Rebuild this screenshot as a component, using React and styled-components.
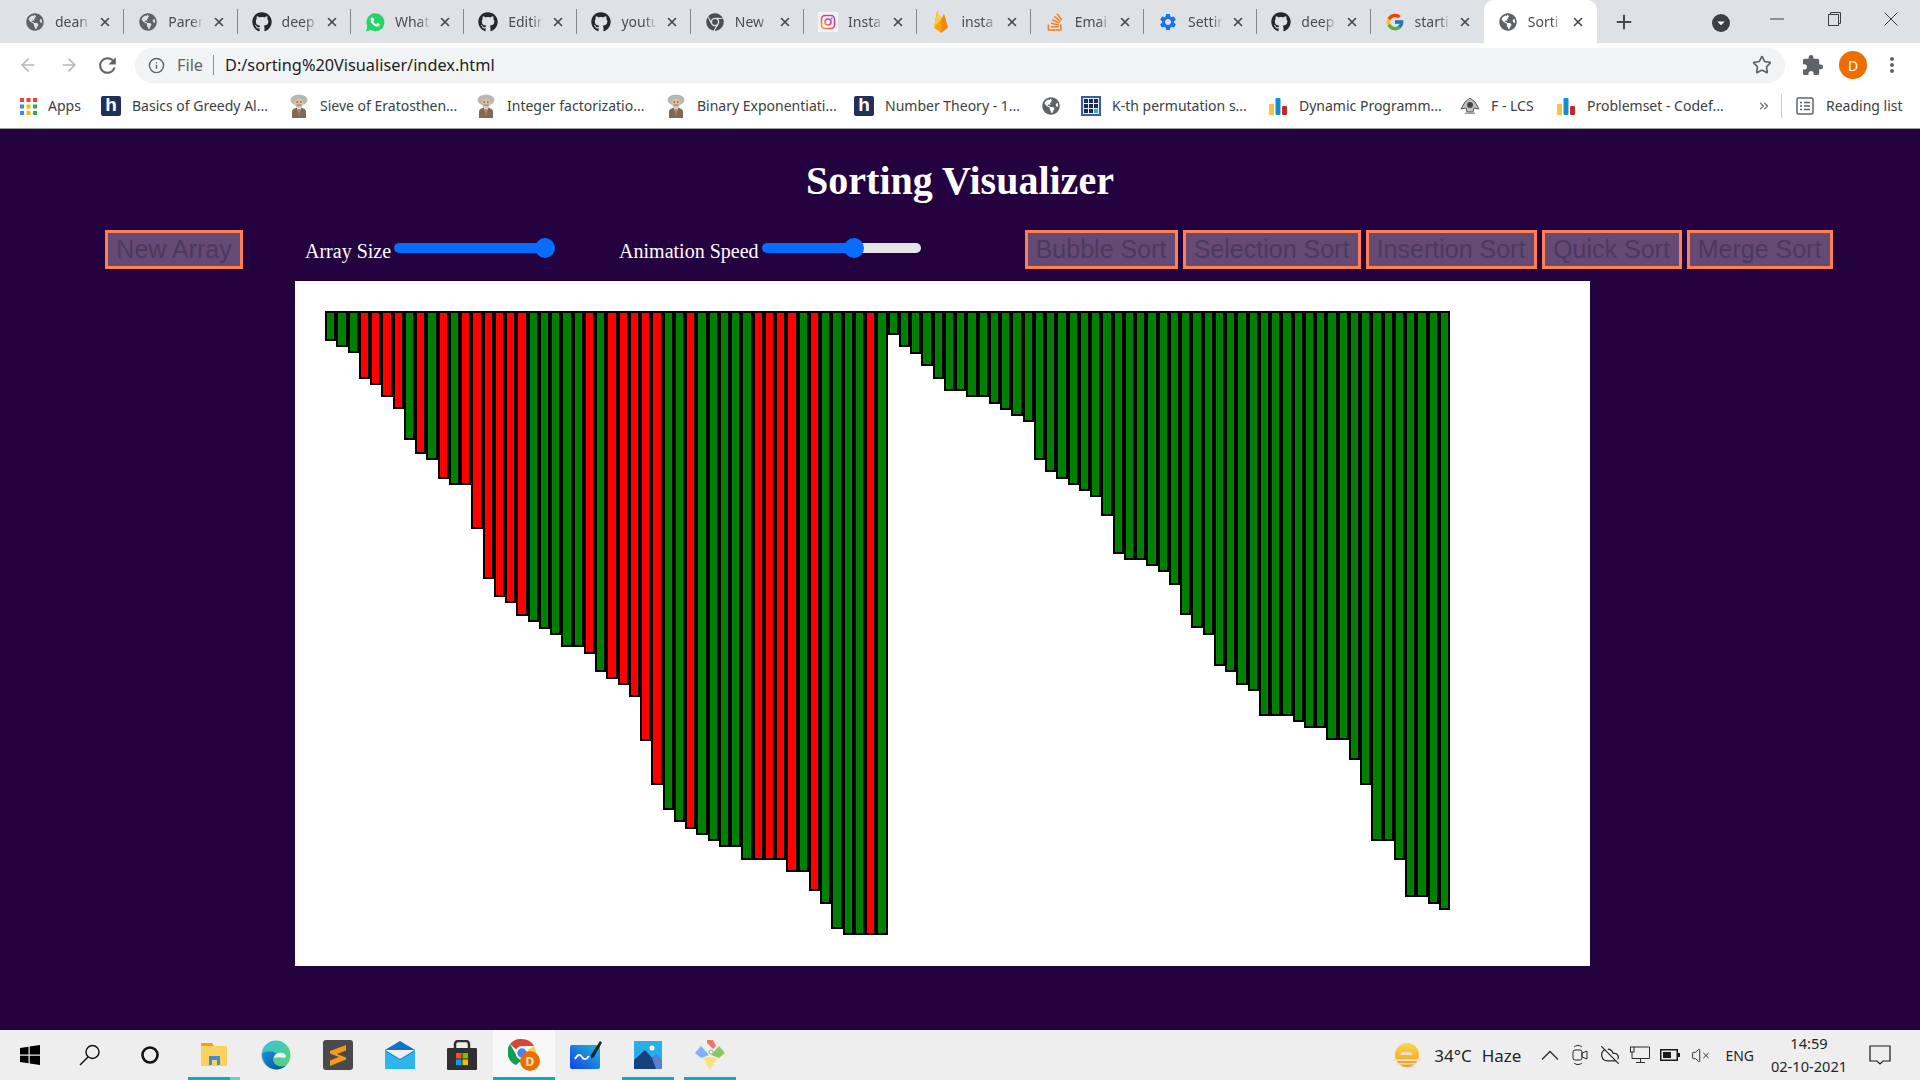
import React from "react";
import styled, { createGlobalStyle } from "styled-components";
import { FaGithub, FaGlobeAmericas, FaChrome, FaStackOverflow } from "react-icons/fa";
import { FcGoogle } from "react-icons/fc";
import { MdSettings, MdExtension, MdMoreVert, MdRefresh, MdArrowDropDown } from "react-icons/md";
import {
  ArrowLeft,
  ArrowRight,
  X,
  Plus,
  Info,
  Star,
  CloudOff,
  VolumeX,
  ChevronsRight,
} from "lucide-react";

const GlobalStyle = createGlobalStyle`
  html, body {
    margin: 0;
    padding: 0;
    height: 100%;
    overflow: hidden;
  }
  #root {
    height: 100%;
  }
`;

const Screen = styled.div`
  width: 1920px;
  height: 1080px;
  display: flex;
  flex-direction: column;
  font-family: "Noto Sans", sans-serif;
  background-color: #24023f;
`;

/* browser chrome */
const TabStrip = styled.div`
  height: 43px;
  flex: none;
  display: flex;
  align-items: stretch;
  padding-left: 11px;
  background-color: #dee1e6;
`;
const Tab = styled.div`
  position: relative;
  width: 113.3px;
  box-sizing: border-box;
  display: flex;
  align-items: center;
  padding: 0 12px 0 14px;
  color: #4a4d51;
  border-radius: 10px 10px 0 0;
  background-color: ${(p) => (p.$active ? "#ffffff" : "transparent")};
  &::after {
    content: "";
    display: ${(p) => (p.$last ? "none" : "block")};
    position: absolute;
    right: 0;
    top: 9px;
    height: 25px;
    width: 1px;
    background-color: #83868a;
  }
`;
const TabIcon = styled.span`
  width: 20px;
  height: 20px;
  flex: none;
  display: flex;
  align-items: center;
  justify-content: center;
  font-size: 20px;
  color: #5f6368;
`;
const TabTitle = styled.span`
  margin-left: 10px;
  width: 38px;
  flex: none;
  overflow: hidden;
  white-space: nowrap;
  font-size: 14px;
  -webkit-mask-image: linear-gradient(to right, #000 62%, transparent 94%);
`;
const TabClose = styled.span`
  margin-left: auto;
  display: flex;
  color: #45484c;
`;
const NewTab = styled.span`
  margin-left: 16px;
  display: flex;
  align-items: center;
  color: #45484c;
`;
const TabSearch = styled.span`
  margin-left: 77px;
  display: flex;
  align-items: center;
  justify-content: center;
  align-self: center;
  margin-top: 3px;
  width: 18px;
  height: 18px;
  border-radius: 50%;
  background-color: #3c4043;
  color: #ffffff;
`;
const WindowControls = styled.div`
  margin-left: auto;
  display: flex;
`;
const WindowButton = styled.div`
  width: 57.3px;
  height: 38px;
  display: flex;
  align-items: center;
  justify-content: center;
  color: #3d3f42;
`;

const Toolbar = styled.div`
  height: 43px;
  flex: none;
  display: flex;
  align-items: center;
  background-color: #ffffff;
  padding: 1px 0 0 5px;
  box-sizing: border-box;
`;
const NavButton = styled.span`
  width: ${(p) => p.$w}px;
  display: flex;
  justify-content: center;
  color: ${(p) => (p.$off ? "#b4b7ba" : "#5f6368")};
`;
const Omnibox = styled.div`
  width: 1650px;
  height: 35px;
  margin-left: 8px;
  box-sizing: border-box;
  display: flex;
  align-items: center;
  padding: 0 13px 0 13px;
  border-radius: 18px;
  background-color: #f1f3f4;
  font-size: 16.3px;
  color: #202124;
`;
const SiteChip = styled.span`
  display: flex;
  align-items: center;
  color: #5f6368;
  gap: 12px;
`;
const Divider = styled.span`
  width: 1px;
  height: 20px;
  margin: 0 11px 0 10px;
  background-color: #8a8d91;
`;
const StarSlot = styled.span`
  margin-left: auto;
  display: flex;
  color: #5f6368;
`;
const ExtensionSlot = styled(NavButton)`
  margin-right: -1px;
`;
const Avatar = styled.span`
  width: 28px;
  height: 28px;
  border-radius: 50%;
  display: flex;
  align-items: center;
  justify-content: center;
  background-color: #ef6c00;
  color: #ffffff;
  font-size: 14px;
`;

const BookmarkBar = styled.div`
  height: 43px;
  flex: none;
  display: flex;
  align-items: center;
  box-sizing: border-box;
  padding: 0 0 2px 18px;
  background-color: #ffffff;
  border-bottom: 1px solid #a0a0a8;
`;
const Bookmark = styled.div`
  width: ${(p) => p.$w}px;
  flex: none;
  display: flex;
  align-items: center;
  gap: ${(p) => p.$gap ?? 11}px;
  font-size: 14px;
  color: #3c4043;
  white-space: nowrap;
`;
const BookmarkText = styled.span`
  padding-bottom: 2px;
`;
const BookmarkIcon = styled.span`
  width: 20px;
  height: 20px;
  flex: none;
  display: flex;
  align-items: center;
  justify-content: center;
  color: #5f6368;
`;
const HackerIcon = styled.span`
  width: 20px;
  height: 20px;
  border-radius: 2px;
  background-color: #20305a;
  color: #ffffff;
  font: bold 19px/18px "Liberation Sans", sans-serif;
  text-align: center;
`;
const MoreBookmarks = styled.span`
  width: 34px;
  display: flex;
  justify-content: center;
  color: #5f6368;
`;
const BarDivider = styled.span`
  width: 1px;
  height: 24px;
  margin-right: 13px;
  background-color: #c8cacc;
`;

/* the page itself */
const Page = styled.main`
  flex: 1;
  min-height: 0;
  display: flex;
  flex-direction: column;
  font-family: "Liberation Serif", serif;
  color: #ffffff;
`;
const Title = styled.h1`
  margin: 0;
  height: 101px;
  padding-top: 29px;
  box-sizing: border-box;
  text-align: center;
  font-size: 40px;
  line-height: 46px;
  font-weight: bold;
`;
const Controls = styled.div`
  height: 39px;
  display: flex;
  align-items: center;
  padding-left: 105px;
`;
const ActionButton = styled.button`
  height: 39px;
  width: ${(p) => p.$w}px;
  margin-left: ${(p) => p.$ml || 0}px;
  padding: 0;
  box-sizing: border-box;
  border: 3px solid #ff7f50;
  border-radius: 0;
  background-color: #644a74;
  color: #4c3a5c;
  font-family: "Liberation Sans", sans-serif;
  font-size: 25px;
  white-space: nowrap;
`;
const SliderGroup = styled.label`
  display: flex;
  align-items: center;
  margin-left: ${(p) => p.$ml}px;
  font-size: 20px;
`;
const SliderLabel = styled.span`
  position: relative;
  top: 2px;
  margin-right: 3px;
`;
const Slider = styled.input.attrs({ type: "range", min: 0, max: 100 })`
  -webkit-appearance: none;
  appearance: none;
  width: ${(p) => p.$w}px;
  height: 10px;
  margin: 0;
  position: relative;
  top: -2px;
  border-radius: 5px;
  background: linear-gradient(to right, #076dfd ${(p) => p.$fill}%, #e6e6e6 ${(p) => p.$fill}%);
  &::-webkit-slider-thumb {
    -webkit-appearance: none;
    width: 20px;
    height: 20px;
    border-radius: 50%;
    background-color: #076dfd;
  }
`;
const Board = styled.section`
  width: 1295px;
  height: 685px;
  margin: 12px 0 0 295px;
  box-sizing: border-box;
  padding: 30px 140px 0 30px;
  background-color: #ffffff;
`;
const Chart = styled.div`
  display: flex;
  align-items: flex-start;
`;
const Bar = styled.div`
  flex: 1 1 0;
  box-sizing: border-box;
  border: 2px solid #000000;
  background-color: ${(p) => (p.$red ? "#ff0000" : "#008000")};
`;

/* windows taskbar */
const Taskbar = styled.footer`
  height: 50px;
  flex: none;
  display: flex;
  align-items: stretch;
  background-color: #eeeeee;
  font-family: "Noto Sans", sans-serif;
  color: #262626;
`;
const SystemCell = styled.div`
  width: 60px;
  flex: none;
  display: flex;
  align-items: center;
  justify-content: center;
`;
const TaskApps = styled.div`
  display: flex;
  margin-left: 3px;
`;
const TaskCell = styled.div`
  position: relative;
  width: 62px;
  flex: none;
  display: flex;
  align-items: center;
  justify-content: center;
  background-color: ${(p) => (p.$active ? "#f8f8f8" : "transparent")};
  &::after {
    content: "";
    display: ${(p) => (p.$open ? "block" : "none")};
    position: absolute;
    bottom: 0;
    height: 3px;
    left: ${(p) => (p.$active ? 0 : 5)}px;
    right: ${(p) => (p.$active ? 0 : 5)}px;
    background: ${(p) =>
      p.$stacked ? "linear-gradient(to right, #00b0c4 80%, #66d0dc 80%)" : "#00b0c4"};
  }
`;
const Tray = styled.div`
  margin-left: auto;
  display: flex;
  align-items: center;
  padding-right: 12px;
`;
const Weather = styled.span`
  font-size: 17px;
  margin-left: ${(p) => p.$ml}px;
`;
const TrayIcons = styled.div`
  display: flex;
  align-items: center;
  margin-left: 14px;
`;
const TrayIcon = styled.span`
  width: 30px;
  display: flex;
  justify-content: center;
  color: #2b2b2b;
`;
const Lang = styled.span`
  margin-left: 10px;
  font-size: 14px;
`;
const Clock = styled.div`
  width: 80px;
  margin-left: 15px;
  text-align: center;
  font-size: 14.6px;
  line-height: 23px;
`;
const Notify = styled.span`
  margin: 0 17px 0 20px;
  width: 22px;
  display: flex;
`;

/* logo drawings */
const Whatsapp = () => (
  <svg width="20" height="20" viewBox="0 0 20 20">
    <path d="M1 19.4l1.4-5A9 9 0 1 1 5.8 18z" fill="#25d366" />
    <path d="M7.2 5.5c-.6 0-1.6.8-1.6 2.4 0 2.8 3.6 6.6 6.8 6.6 1.5 0 2.3-1 2.3-1.8l-.1-.6-2.2-1-1 1.2c-1.3-.4-2.7-1.8-3.2-3.1l.9-1.1-.9-2.3z" fill="#fff" />
  </svg>
);
const Instagram = () => (
  <svg width="20" height="20" viewBox="0 0 20 20">
    <defs>
      <linearGradient id="ig" x1="0" y1="1" x2="1" y2="0">
        <stop offset="0" stopColor="#f5a13c" />
        <stop offset="0.5" stopColor="#d8457b" />
        <stop offset="1" stopColor="#8a4fc0" />
      </linearGradient>
    </defs>
    <rect width="20" height="20" fill="#f3f3f3" />
    <rect x="3.5" y="3.5" width="13" height="13" rx="3.5" fill="none" stroke="url(#ig)" strokeWidth="1.6" />
    <circle cx="10" cy="10" r="3" fill="none" stroke="url(#ig)" strokeWidth="1.5" />
    <circle cx="13.7" cy="6.3" r="0.9" fill="#a84da8" />
  </svg>
);
const Firebase = () => (
  <svg width="18" height="24" viewBox="0 0 18 24">
    <path d="M2 17.5L5 1l4.500 8L12 4l4 13.500L9 23z" fill="#f6a10e" />
    <path d="M2 17.5L5 1l4.500 8z" fill="#fcca3f" />
    <path d="M9 23l7-5.500L12 4l-2.500 5z" fill="#f08a0c" />
  </svg>
);
const Einstein = () => (
  <svg width="20" height="24" viewBox="0 0 20 24">
    <path d="M3 24v-6c0-3 3-4.500 7-4.500s7 1.500 7 4.500v6z" fill="#7d6a55" />
    <path d="M8 13.500h4l-2 8z" fill="#ece8e0" />
    <rect x="9.4" y="15" width="1.2" height="5" fill="#a83a32" />
    <ellipse cx="10" cy="6" rx="8.500" ry="5.500" fill="#b8b8b2" />
    <ellipse cx="10" cy="9" rx="4.500" ry="4.500" fill="#dcc0a0" />
    <rect x="7.500" y="7.500" width="1.500" height="1.200" fill="#55504a" />
    <rect x="11" y="7.500" width="1.500" height="1.200" fill="#55504a" />
    <rect x="7.500" y="10.500" width="5" height="1.200" fill="#8e8c86" />
  </svg>
);
const AppsGrid = () => (
  <svg width="17" height="17" viewBox="0 0 17 17">
    {["#ea4335", "#ea4335", "#ea4335", "#4285f4", "#fbbc05", "#34a853", "#4285f4", "#fbbc05", "#34a853"].map((c, i) => (
      <rect key={i} x={(i % 3) * 6.5} y={Math.floor(i / 3) * 6.5} width="4" height="4" fill={c} />
    ))}
  </svg>
);
const GridLogo = () => (
  <svg width="20" height="20" viewBox="0 0 20 20">
    <rect width="20" height="20" fill="#3a5da8" />
    <rect x="2" y="2" width="16" height="16" fill="#e8eef8" />
    {[0, 1, 2, 3, 4, 5, 6, 7, 8].map((i) => (
      <rect key={i} x={3 + (i % 3) * 5} y={3 + Math.floor(i / 3) * 5} width="4" height="4" fill={i === 8 ? "#4aa" : "#1e2c4e"} />
    ))}
  </svg>
);
const CfBars = () => (
  <svg width="20" height="20" viewBox="0 0 20 20">
    <rect x="1" y="8" width="5" height="11" rx="1" fill="#f9c13c" />
    <rect x="7.5" y="2" width="5" height="17" rx="1" fill="#1a8ad0" />
    <rect x="14" y="10" width="5" height="9" rx="1" fill="#c62828" />
  </svg>
);
const Crest = () => (
  <svg width="20" height="20" viewBox="0 0 20 20">
    <path d="M10 2l5 4 4 7-5-1-1 4H7l-1-4-5 1 4-7z" fill="#bfc1c2" stroke="#555" strokeWidth="1" />
    <circle cx="10" cy="9" r="3" fill="#444" />
    <rect x="5" y="16.5" width="10" height="1.5" fill="#999" />
  </svg>
);
const ReadingList = () => (
  <svg width="18" height="18" viewBox="0 0 18 18" fill="none" stroke="#5f6368" strokeWidth="1.5">
    <rect x="1" y="1" width="16" height="16" rx="1.5" />
    <path d="M4 5.5h2M8 5.5h6M4 9h2M8 9h6M4 12.5h2M8 12.5h6" />
  </svg>
);
const Restore = () => (
  <svg width="13" height="14" viewBox="0 0 13 14" fill="none" stroke="#3d3f42" strokeWidth="1">
    <rect x="0.5" y="2.5" width="10" height="11" />
    <path d="M2.5 2.5v-2h10v11h-2" />
  </svg>
);
const WinClose = () => (
  <svg width="14" height="14" viewBox="0 0 14 14" stroke="#3d3f42" strokeWidth="1">
    <path d="M.5.5l13 13M13.5.5l-13 13" />
  </svg>
);
const WinMin = () => (
  <svg width="14" height="2" viewBox="0 0 14 2" stroke="#3d3f42" strokeWidth="1">
    <path d="M0 1h14" />
  </svg>
);

const WinLogo = () => (
  <svg width="22" height="22" viewBox="0 0 22 22" fill="#000">
    <path d="M1 4l8.5-1.300V10.500H1zM10.700 2.500L21 1v9.500H10.700zM1 11.700h8.500v7.600L1 18zM10.700 11.700H21V21l-10.300-1.500z" />
  </svg>
);
const SearchGlyph = () => (
  <svg width="24" height="24" viewBox="0 0 24 24" fill="none" stroke="#111" strokeWidth="1.4">
    <circle cx="14.5" cy="9" r="6.5" />
    <path d="M10 14l-8 8" />
  </svg>
);
const Cortana = () => (
  <svg width="20" height="20" viewBox="0 0 20 20" fill="none" stroke="#111" strokeWidth="2.6">
    <circle cx="10" cy="10" r="7.5" />
  </svg>
);
const Explorer = () => (
  <svg width="28" height="26" viewBox="0 0 28 26">
    <path d="M1 1h11l2 3H1z" fill="#e8a317" />
    <rect x="1" y="4" width="26" height="20" fill="#fbd35c" />
    <path d="M9 23V14h11v9h-3v-5h-5v5z" fill="#3f8ed8" />
  </svg>
);
const Edge = () => (
  <svg width="30" height="30" viewBox="0 0 30 30">
    <defs>
      <linearGradient id="edgeA" x1="0" y1="0" x2="1" y2="1">
        <stop offset="0" stopColor="#37c2e0" />
        <stop offset="1" stopColor="#5fd26a" />
      </linearGradient>
      <linearGradient id="edgeB" x1="0" y1="0" x2="1" y2="1">
        <stop offset="0" stopColor="#1b8fd6" />
        <stop offset="1" stopColor="#0c4d92" />
      </linearGradient>
    </defs>
    <circle cx="15" cy="15" r="14.5" fill="url(#edgeA)" />
    <path d="M1 14C2 25 10 30 16 29.5c5-.4 8-3 9-4-5 2-10 .5-12-3-2-3.5-.5-7 3-8.5-5-4-13-3-15 0z" fill="url(#edgeB)" />
    <path d="M13 18c0-3 3-6 8-5 3 .5 4 2 4 3 0 2-3 2-5 1.500-2-.5-4 0-7 .5z" fill="#eef7ee" />
  </svg>
);
const Sublime = () => (
  <svg width="30" height="30" viewBox="0 0 30 30">
    <rect width="30" height="30" rx="3" fill="#4a4a4a" />
    <path d="M7 11L23 5v5.500L14 14l9 3.500v2L7 26v-5.500l9-3.500-9-3.500z" fill="#f69a1c" />
  </svg>
);
const Mail = () => (
  <svg width="30" height="28" viewBox="0 0 30 28">
    <path d="M0 9L15 0l15 9v19H0z" fill="#1173c8" />
    <path d="M0 9h30L15 18z" fill="#f0f0f0" />
    <path d="M0 10l15 9 15-9v18H0z" fill="#2fb5ee" />
  </svg>
);
const Store = () => (
  <svg width="30" height="30" viewBox="0 0 30 30">
    <rect y="8" width="30" height="22" rx="1" fill="#303030" />
    <path d="M8 9V4a3 3 0 0 1 3-3h8a3 3 0 0 1 3 3v5" fill="none" stroke="#303030" strokeWidth="2.5" />
    <rect x="9" y="13" width="5.5" height="5.5" fill="#f25022" />
    <rect x="15.5" y="13" width="5.5" height="5.5" fill="#7fba00" />
    <rect x="9" y="19.5" width="5.5" height="5.5" fill="#00a4ef" />
    <rect x="15.5" y="19.5" width="5.5" height="5.5" fill="#ffb900" />
  </svg>
);
const ChromeProfile = () => (
  <svg width="32" height="32" viewBox="0 0 32 32">
    <path d="M14 0a14 14 0 0 1 12 7H14a7 7 0 0 0-6 3.5L2 5a14 14 0 0 1 12-5z" fill="#db4437" />
    <path d="M2 5l6 10.5a7 7 0 0 0 6 5.5L8 26A14 14 0 0 1 2 5z" fill="#0f9d58" />
    <path d="M26 7a14 14 0 0 1-6 20l-6-6a7 7 0 0 0 6-10z" fill="#ffcd40" />
    <circle cx="14" cy="14" r="5.5" fill="#4285f4" stroke="#fff" strokeWidth="1.5" />
    <circle cx="22" cy="22" r="10" fill="#ef6c00" />
    <text x="22" y="26.5" textAnchor="middle" fontSize="12" fontWeight="bold" fill="#f5e6c8" fontFamily="Noto Sans, sans-serif">D</text>
  </svg>
);
const Whiteboard = () => (
  <svg width="32" height="28" viewBox="0 0 32 28">
    <defs>
      <linearGradient id="wb" x1="0" y1="1" x2="1" y2="0">
        <stop offset="0" stopColor="#1340e8" />
        <stop offset="1" stopColor="#22b8d8" />
      </linearGradient>
    </defs>
    <rect y="4" width="30" height="24" rx="2" fill="url(#wb)" />
    <path d="M5 18c3-5 5-5 7-2s4 3 7-1" fill="none" stroke="#fff" strokeWidth="1.8" />
    <path d="M21 14l9-14 2 1.5L24 16l-3 1.500z" fill="#222" />
  </svg>
);
const Photos = () => (
  <svg width="28" height="28" viewBox="0 0 28 28">
    <rect width="28" height="28" fill="#27aee8" />
    <circle cx="18" cy="7" r="2.5" fill="#fff" />
    <path d="M0 28V19l11-10 7 8 4-3 6 6v8z" fill="#16407e" />
    <path d="M18 17l4-3 6 6v8h-6z" fill="#5a7fd0" />
  </svg>
);
const Sourcetree = () => (
  <svg width="32" height="32" viewBox="0 0 32 32">
    <path d="M16 18l-7 1 7 12 7-12z" fill="#fde07c" />
    <path d="M1 14l6-7 8 9-8 3z" fill="#7fb0f8" />
    <path d="M31 14l-6-7-8 9 8 3z" fill="#8cc866" />
    <path d="M13 1h6l3 6-3 3-6-6z" fill="#ee7668" />
    <circle cx="17" cy="13" r="2" fill="#fff" stroke="#8cc866" />
  </svg>
);
const Sun = () => (
  <svg width="28" height="28" viewBox="0 0 28 28">
    <defs>
      <linearGradient id="sun" x1="0" y1="0" x2="0" y2="1">
        <stop offset="0" stopColor="#fdd84b" />
        <stop offset="1" stopColor="#f39a1e" />
      </linearGradient>
    </defs>
    <circle cx="14" cy="14" r="12" fill="url(#sun)" />
    <path d="M7 14c1-3 4-4 7-3 2-1 5 0 6 3h-13zM0 18h28v2H0zM4 22h20v1.5H4z" fill="#e8e0cc" />
  </svg>
);
const Chevron = () => (
  <svg width="18" height="10" viewBox="0 0 18 10" fill="none" stroke="#2b2b2b" strokeWidth="1.3">
    <path d="M1 9.500l8-8 8 8" />
  </svg>
);
const Camera = () => (
  <svg width="16" height="22" viewBox="0 0 16 22" fill="none" stroke="#2b2b2b" strokeWidth="1">
    <rect x="1" y="6" width="9" height="10" rx="2" />
    <path d="M10 9l5-2v8l-5-2zM2 3c2-2 6-2 8 0M2 19c2 2 6 2 8 0" />
  </svg>
);
const Display = () => (
  <svg width="20" height="18" viewBox="0 0 20 18" fill="none" stroke="#2b2b2b" strokeWidth="1">
    <path d="M4 1h15.5v11.5H2V6M10.5 12.5v4M6 16.5h9" />
    <rect x="0.5" y="1" width="3.5" height="5" />
  </svg>
);
const Battery = () => (
  <svg width="20" height="12" viewBox="0 0 20 12">
    <rect x="0.75" y="0.75" width="16.5" height="10.5" fill="none" stroke="#1a1a1a" strokeWidth="1.5" />
    <rect x="3" y="3" width="8" height="6" fill="#1a1a1a" />
    <rect x="18" y="4" width="2" height="4" fill="#1a1a1a" />
  </svg>
);
const Balloon = () => (
  <svg width="22" height="20" viewBox="0 0 22 20" fill="none" stroke="#1a1a1a" strokeWidth="1.2">
    <path d="M1 1h20v15h-7l-3 3-3-3H1z" />
  </svg>
);

const CloseIcon = () => <X size={14} strokeWidth={2.8} />;

const tabs = [
  { title: "dean", icon: <FaGlobeAmericas size={18} /> },
  { title: "Paren", icon: <FaGlobeAmericas size={18} /> },
  { title: "deep", icon: <FaGithub size={20} color="#24292e" /> },
  { title: "What", icon: <Whatsapp /> },
  { title: "Editir", icon: <FaGithub size={20} color="#24292e" /> },
  { title: "youtu", icon: <FaGithub size={20} color="#24292e" /> },
  { title: "New", icon: <FaChrome size={18} color="#4a4d51" /> },
  { title: "Insta", icon: <Instagram /> },
  { title: "insta", icon: <Firebase /> },
  { title: "Emai", icon: <FaStackOverflow size={20} color="#f48024" /> },
  { title: "Settir", icon: <MdSettings size={20} color="#1a73e8" /> },
  { title: "deep", icon: <FaGithub size={20} color="#24292e" /> },
  { title: "starti", icon: <FcGoogle size={20} /> },
  { title: "Sorti", icon: <FaGlobeAmericas size={18} />, active: true },
];

const bookmarks = [
  { w: 83, icon: <AppsGrid />, text: "Apps", gap: 10 },
  { w: 188, icon: <HackerIcon>h</HackerIcon>, text: "Basics of Greedy Al..." },
  { w: 187, icon: <Einstein />, text: "Sieve of Eratosthen..." },
  { w: 190, icon: <Einstein />, text: "Integer factorizatio..." },
  { w: 188, icon: <Einstein />, text: "Binary Exponentiati..." },
  { w: 187, icon: <HackerIcon>h</HackerIcon>, text: "Number Theory - 1..." },
  { w: 40, icon: <FaGlobeAmericas size={18} /> },
  { w: 187, icon: <GridLogo />, text: "K-th permutation s..." },
  { w: 192, icon: <CfBars />, text: "Dynamic Programm..." },
  { w: 96, icon: <Crest />, text: "F - LCS" },
  { w: 191, icon: <CfBars />, text: "Problemset - Codef..." },
];

const taskApps = [
  { icon: <Explorer />, open: true, stacked: true },
  { icon: <Edge /> },
  { icon: <Sublime /> },
  { icon: <Mail /> },
  { icon: <Store /> },
  { icon: <ChromeProfile />, open: true, active: true },
  { icon: <Whiteboard /> },
  { icon: <Photos />, open: true },
  { icon: <Sourcetree />, open: true },
];

const bottoms = [
  341, 347, 353, 379, 385, 397, 409, 440, 454, 460,
  479, 485, 485, 529, 579, 597, 603, 616, 622, 629,
  635, 647, 647, 654, 672, 679, 685, 697, 741, 785,
  810, 822, 829, 835, 841, 847, 847, 860, 860, 860,
  860, 872, 872, 891, 904, 929, 935, 935, 935, 935,
  335, 347, 354, 366, 379, 391, 391, 397, 397, 404,
  410, 416, 422, 460, 472, 479, 485, 491, 497, 516,
  554, 560, 560, 566, 572, 585, 615, 628, 635, 666,
  672, 685, 691, 716, 716, 716, 722, 728, 728, 740,
  740, 760, 785, 841, 841, 860, 897, 897, 904, 910,
];
const redBars = [3, 4, 5, 6, 8, 10, 12, 13, 14, 15, 16, 17, 23, 25, 26, 27, 28, 29, 32, 38, 39, 40, 41, 43, 48];

export default function App() {
  return (
    <Screen>
      <GlobalStyle />
      <TabStrip>
        {tabs.map((t, i) => (
          <Tab key={i} $active={t.active} $last={t.active || i === 12}>
            <TabIcon>{t.icon}</TabIcon>
            <TabTitle>{t.title}</TabTitle>
            <TabClose>
              <CloseIcon />
            </TabClose>
          </Tab>
        ))}
        <NewTab>
          <Plus size={22} strokeWidth={2.2} />
        </NewTab>
        <TabSearch>
          <MdArrowDropDown size={24} />
        </TabSearch>
        <WindowControls>
          <WindowButton><WinMin /></WindowButton>
          <WindowButton><Restore /></WindowButton>
          <WindowButton><WinClose /></WindowButton>
        </WindowControls>
      </TabStrip>

      <Toolbar>
        <NavButton $w={46} $off><ArrowLeft size={20} /></NavButton>
        <NavButton $w={36} $off><ArrowRight size={20} /></NavButton>
        <NavButton $w={40}><MdRefresh size={25} /></NavButton>
        <Omnibox>
          <SiteChip>
            <Info size={17} />
            File
          </SiteChip>
          <Divider />
          D:/sorting%20Visualiser/index.html
          <StarSlot><Star size={20} /></StarSlot>
        </Omnibox>
        <ExtensionSlot $w={55}><MdExtension size={23} /></ExtensionSlot>
        <Avatar>D</Avatar>
        <NavButton $w={50}><MdMoreVert size={24} /></NavButton>
      </Toolbar>

      <BookmarkBar>
        {bookmarks.map((b, i) => (
          <Bookmark key={i} $w={b.w} $gap={b.gap}>
            <BookmarkIcon>{b.icon}</BookmarkIcon>
            {b.text && <BookmarkText>{b.text}</BookmarkText>}
          </Bookmark>
        ))}
        <MoreBookmarks><ChevronsRight size={14} /></MoreBookmarks>
        <BarDivider />
        <Bookmark $w={120}>
          <BookmarkIcon><ReadingList /></BookmarkIcon>
          <BookmarkText>Reading list</BookmarkText>
        </Bookmark>
      </BookmarkBar>

      <Page>
        <Title>Sorting Visualizer</Title>
        <Controls>
          <ActionButton $w={138} disabled>New Array</ActionButton>
          <SliderGroup $ml={62}>
            <SliderLabel>Array Size</SliderLabel>
            <Slider $w={161} $fill={100} defaultValue={100} />
          </SliderGroup>
          <SliderGroup $ml={64}>
            <SliderLabel>Animation Speed</SliderLabel>
            <Slider $w={159} $fill={59} defaultValue={59} />
          </SliderGroup>
          <ActionButton $w={153} $ml={104} disabled>Bubble Sort</ActionButton>
          <ActionButton $w={178} $ml={5} disabled>Selection Sort</ActionButton>
          <ActionButton $w={171} $ml={5} disabled>Insertion Sort</ActionButton>
          <ActionButton $w={140} $ml={5} disabled>Quick Sort</ActionButton>
          <ActionButton $w={146} $ml={5} disabled>Merge Sort</ActionButton>
        </Controls>
        <Board>
          <Chart>
            {bottoms.map((b, i) => (
              <Bar key={i} $red={redBars.includes(i)} style={{ height: b - 311 }} />
            ))}
          </Chart>
        </Board>
      </Page>

      <Taskbar>
        <SystemCell><WinLogo /></SystemCell>
        <SystemCell><SearchGlyph /></SystemCell>
        <SystemCell><Cortana /></SystemCell>
        <TaskApps>
          {taskApps.map((a, i) => (
            <TaskCell key={i} $open={a.open} $active={a.active} $stacked={a.stacked}>{a.icon}</TaskCell>
          ))}
        </TaskApps>
        <Tray>
          <Sun />
          <Weather $ml={13}>34°C</Weather>
          <Weather $ml={10}>Haze</Weather>
          <TrayIcons>
            <TrayIcon><Chevron /></TrayIcon>
            <TrayIcon><Camera /></TrayIcon>
            <TrayIcon><CloudOff size={20} strokeWidth={1.5} /></TrayIcon>
            <TrayIcon><Display /></TrayIcon>
            <TrayIcon><Battery /></TrayIcon>
            <TrayIcon><VolumeX size={19} strokeWidth={1.2} /></TrayIcon>
          </TrayIcons>
          <Lang>ENG</Lang>
          <Clock>
            14:59
            <br />
            02-10-2021
          </Clock>
          <Notify><Balloon /></Notify>
        </Tray>
      </Taskbar>
    </Screen>
  );
}
